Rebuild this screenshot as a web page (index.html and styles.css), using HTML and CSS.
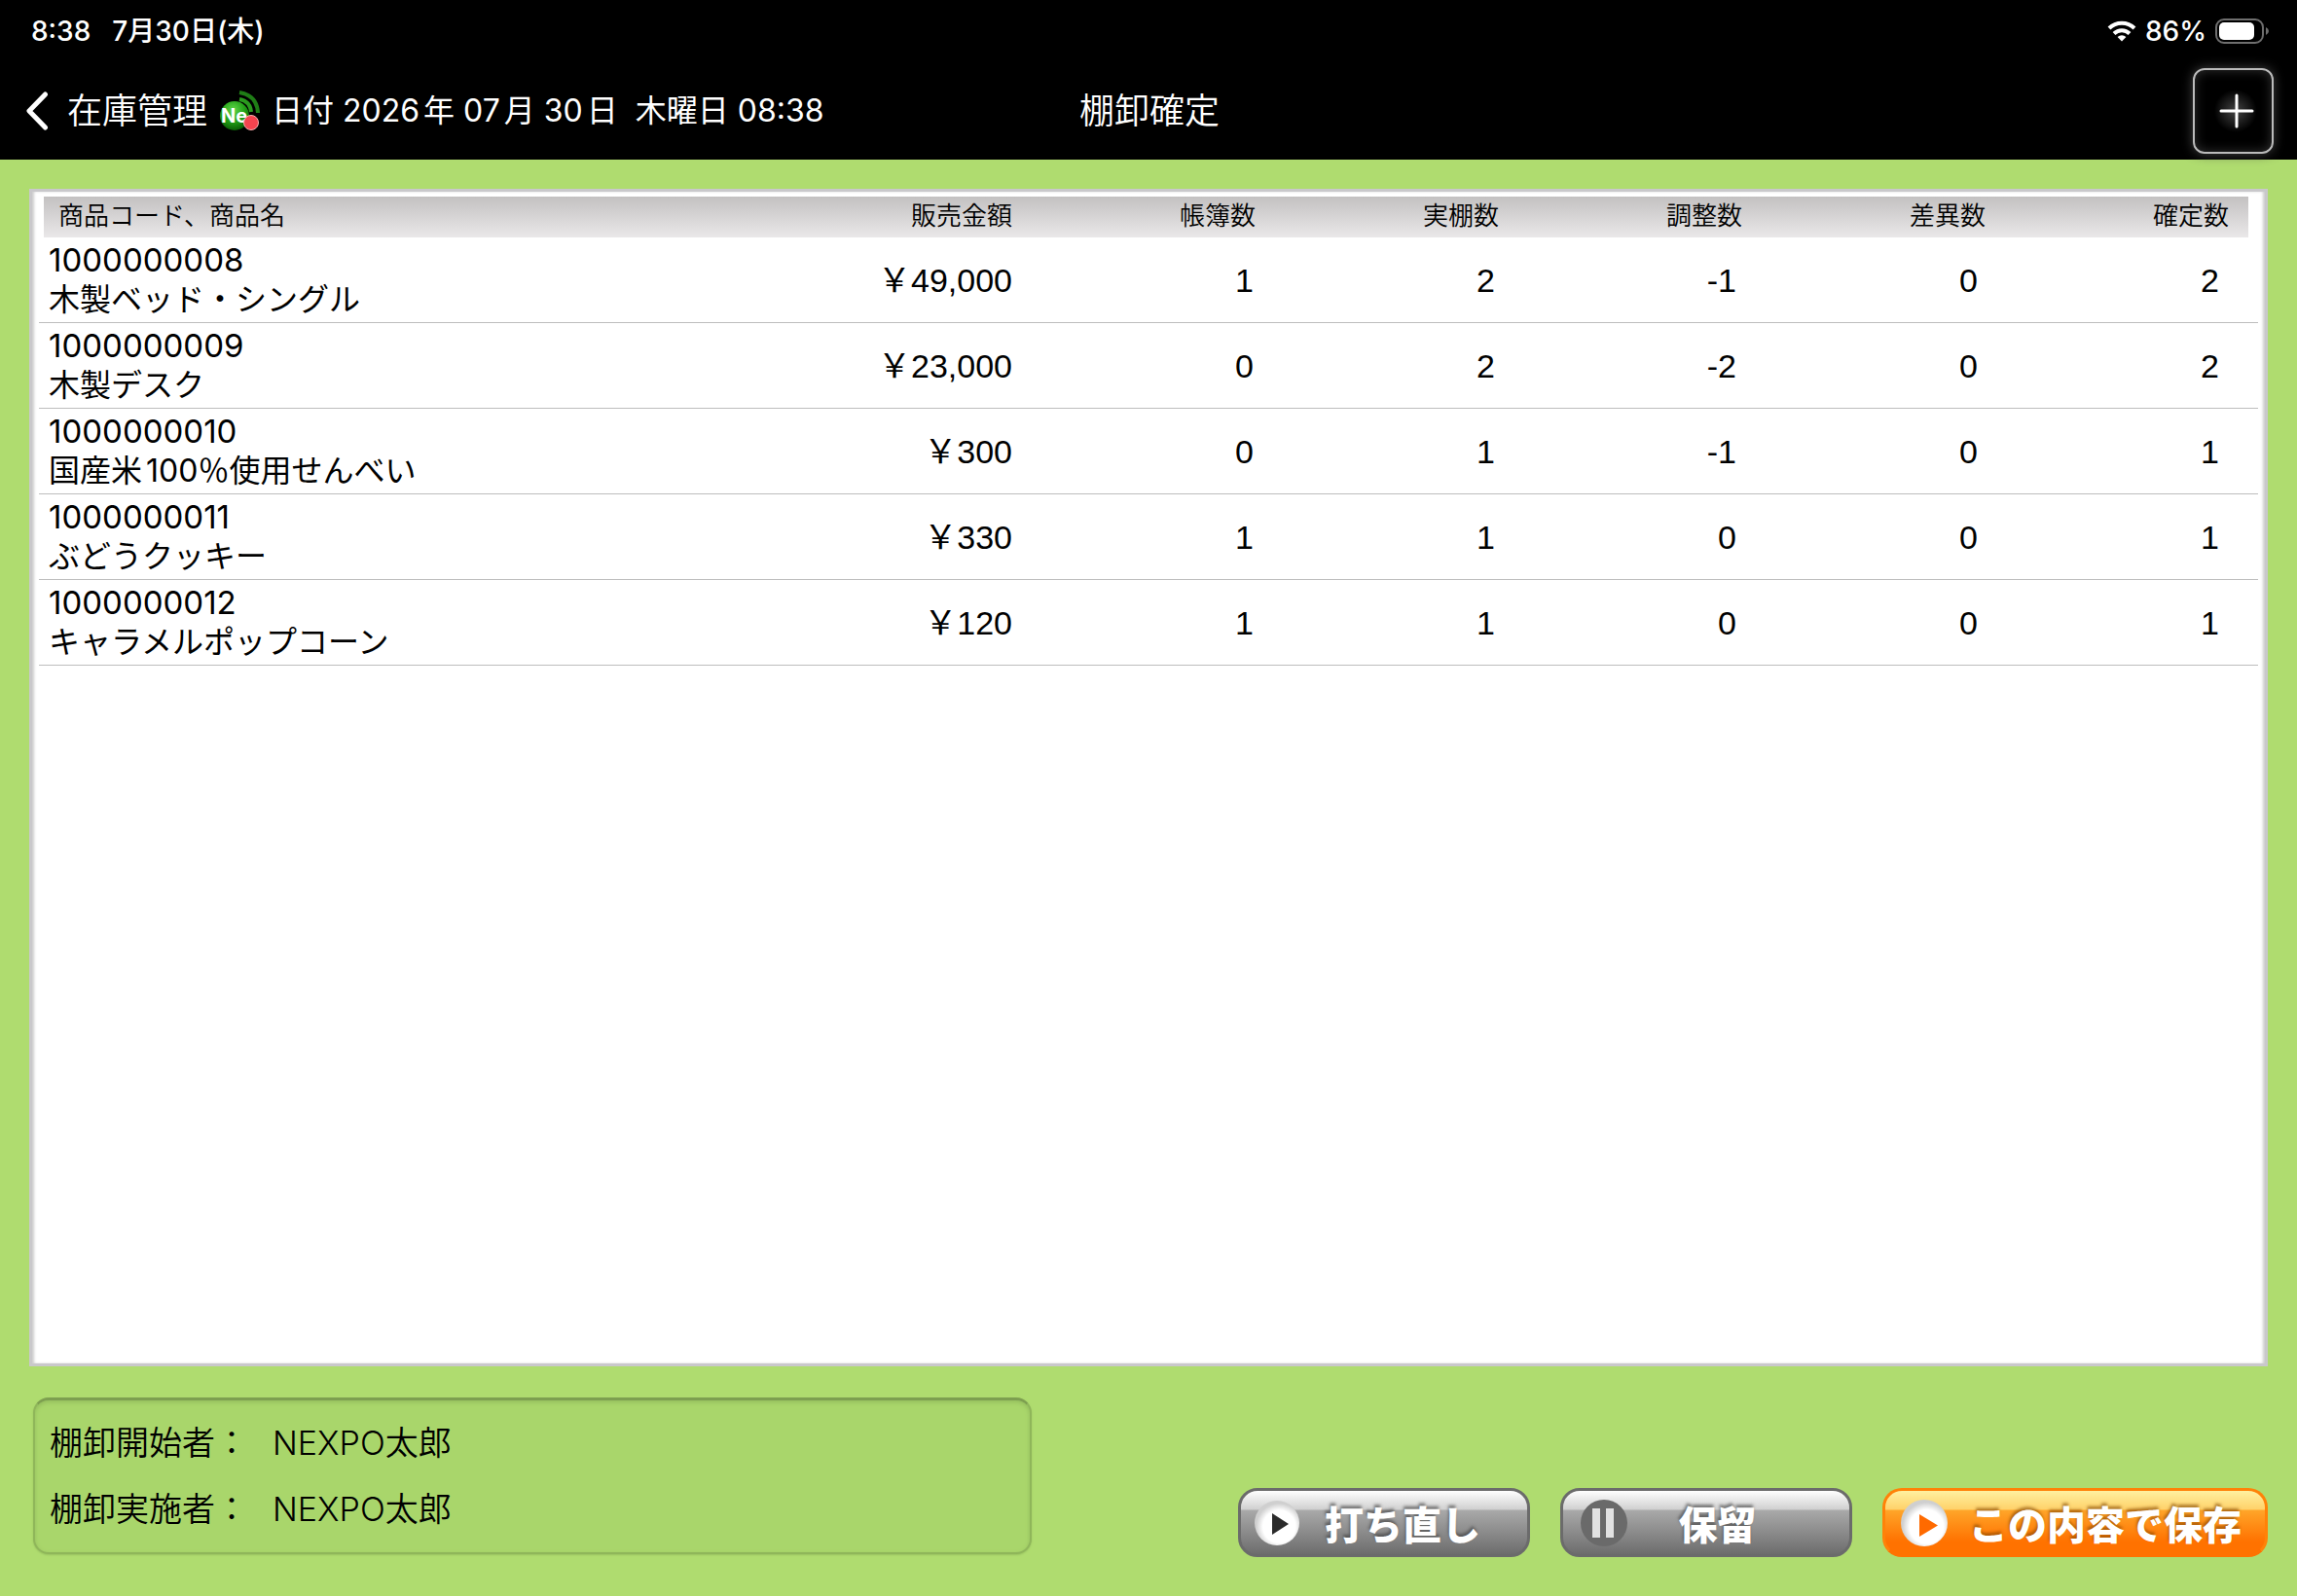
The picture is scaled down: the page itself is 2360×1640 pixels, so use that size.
FILE: index.html
```html
<!DOCTYPE html>
<html lang="ja">

<head>
    <meta charset="UTF-8">
    <meta name="viewport" content="width=device-width, initial-scale=1">
    <title>棚卸確定</title>
    <link rel="stylesheet" href="styles.css">
</head>

<body>

    <header class="topbar">
        <div class="statusbar">
            <div class="status-left">
                <span>8:38</span>
                <span>7月30日(木)</span>
            </div>
            <div class="status-right">
                <svg class="wifi" viewBox="0 0 30 22" width="30" height="22" aria-hidden="true">
                    <path d="M2 8a18.500 18.500 0 0 1 26 0" fill="none" stroke="#fff" stroke-width="4" />
                    <path d="M7 13.500a11.500 11.500 0 0 1 16 0" fill="none" stroke="#fff" stroke-width="4" />
                    <path d="M10.600 17a6.400 6.400 0 0 1 8.800 0L15 21.500z" fill="#fff" />
                </svg>
                <span>86%</span>
                <svg class="battery" viewBox="0 0 56 28" width="56" height="28" aria-hidden="true">
                    <rect x="1" y="2" width="48" height="24" rx="8" fill="none" stroke="#6e6e6e" stroke-width="2" />
                    <rect x="4" y="5" width="36" height="18" rx="5" fill="#fff" />
                    <path d="M52 10q3 1.500 3 4t-3 4z" fill="#6e6e6e" />
                </svg>
            </div>
        </div>

        <nav class="navbar">
            <div class="nav-left">
                <a class="back" href="#">
                    <svg viewBox="0 0 24 40" width="24" height="40" aria-hidden="true">
                        <path d="M20.500 3L4 20l16.500 17" fill="none" stroke="#fff" stroke-width="5" stroke-linecap="round" stroke-linejoin="round" />
                    </svg>
                    <span>在庫管理</span>
                </a>
                <svg class="signal" viewBox="0 0 42 42" width="42" height="42" aria-hidden="true">
                    <defs>
                        <radialGradient id="ball" cx="45%" cy="30%" r="70%">
                            <stop offset="0" stop-color="#5fd648" />
                            <stop offset="0.600" stop-color="#1f9c14" />
                            <stop offset="1" stop-color="#0a5c06" />
                        </radialGradient>
                    </defs>
                    <circle cx="16" cy="26" r="15" fill="url(#ball)" />
                    <path d="M21 2q18 3 19 21" fill="none" stroke="#1f7d16" stroke-width="4" />
                    <path d="M21 9q11 2 12 13" fill="none" stroke="#2a9a1e" stroke-width="4" />
                    <text x="2" y="33" class="signal-text">Ne</text>
                    <circle cx="33" cy="33" r="7.500" fill="#f5444f" stroke="#f7b0b0" stroke-width="1" />
                </svg>
                <span class="date">日付 2026年 07月 30日  木曜日 08:38</span>
            </div>
            <h1>棚卸確定</h1>
            <div class="nav-right">
                <button class="add" type="button" aria-label="追加">
                    <svg viewBox="0 0 36 36" width="36" height="36" aria-hidden="true">
                        <path d="M18 2v32M2 18h32" stroke="#fff" stroke-width="3" stroke-linecap="round" />
                    </svg>
                </button>
            </div>
        </nav>
    </header>

    <main>
        <div class="panel">
            <table class="stock">
                <thead>
                    <tr>
                        <th>商品コード、商品名</th>
                        <th>販売金額</th>
                        <th>帳簿数</th>
                        <th>実棚数</th>
                        <th>調整数</th>
                        <th>差異数</th>
                        <th>確定数</th>
                    </tr>
                </thead>
                <tbody>
                    <tr>
                        <td><span class="code">1000000008</span><br>木製ベッド・シングル</td>
                        <td>￥49,000</td>
                        <td>1</td>
                        <td>2</td>
                        <td>-1</td>
                        <td>0</td>
                        <td>2</td>
                    </tr>
                    <tr>
                        <td><span class="code">1000000009</span><br>木製デスク</td>
                        <td>￥23,000</td>
                        <td>0</td>
                        <td>2</td>
                        <td>-2</td>
                        <td>0</td>
                        <td>2</td>
                    </tr>
                    <tr>
                        <td><span class="code">1000000010</span><br>国産米100％使用せんべい</td>
                        <td>￥300</td>
                        <td>0</td>
                        <td>1</td>
                        <td>-1</td>
                        <td>0</td>
                        <td>1</td>
                    </tr>
                    <tr>
                        <td><span class="code">1000000011</span><br>ぶどうクッキー</td>
                        <td>￥330</td>
                        <td>1</td>
                        <td>1</td>
                        <td>0</td>
                        <td>0</td>
                        <td>1</td>
                    </tr>
                    <tr>
                        <td><span class="code">1000000012</span><br>キャラメルポップコーン</td>
                        <td>￥120</td>
                        <td>1</td>
                        <td>1</td>
                        <td>0</td>
                        <td>0</td>
                        <td>1</td>
                    </tr>
                </tbody>
            </table>
        </div>

        <div class="bottom">
            <dl class="staff">
                <dt>棚卸開始者：</dt>
                <dd>NEXPO太郎</dd>
                <dt>棚卸実施者：</dt>
                <dd>NEXPO太郎</dd>
            </dl>

            <div class="actions">
                <button class="btn" type="button">
                    <svg viewBox="0 0 48 48" width="48" height="48" aria-hidden="true">
                        <defs>
                            <radialGradient id="disc" cx="55%" cy="58%" r="52%">
                                <stop offset="0.700" stop-color="#fff" />
                                <stop offset="1" stop-color="#cfcfcf" />
                            </radialGradient>
                        </defs>
                        <circle cx="24" cy="24" r="23" fill="url(#disc)" />
                        <path d="M19 14v22l17-11z" fill="#2b2b2b" />
                    </svg>
                    <span>打ち直し</span>
                </button>
                <button class="btn btn-hold" type="button">
                    <svg viewBox="0 0 48 48" width="48" height="48" aria-hidden="true">
                        <circle cx="24" cy="24" r="24" fill="#6a6a6a" />
                        <path d="M12 9h8v30h-8zM26 9h8v30h-8z" fill="#e2e2e2" />
                    </svg>
                    <span>保留</span>
                </button>
                <button class="btn btn-save" type="button">
                    <svg viewBox="0 0 48 48" width="48" height="48" aria-hidden="true">
                        <circle cx="24" cy="24" r="24" fill="url(#disc)" />
                        <path d="M19 15v23l19-11.500z" fill="#ff6a00" />
                    </svg>
                    <span>この内容で保存</span>
                </button>
            </div>
        </div>
    </main>

</body>

</html>
```
FILE: styles.css
```css
* {
    margin: 0;
    padding: 0;
    box-sizing: border-box;
}

body {
    display: flex;
    flex-direction: column;
    min-height: 100vh;
    background: #afdc6f;
    color: #000;
    font-family: Inter, "Noto Sans CJK JP", sans-serif;
    font-size: 32px;
    line-height: 40px;
    text-autospace: normal;
}

svg {
    display: block;
    flex: none;
}

/* black header */
.topbar {
    background: #000;
    color: #fff;
}

.statusbar {
    display: flex;
    justify-content: space-between;
    align-items: center;
    height: 64px;
    padding: 0 28px 0 32px;
    font-size: 28px;
    font-weight: 500;
    text-autospace: no-autospace;
}

.status-left {
    display: flex;
    gap: 22px;
}

.status-right {
    display: flex;
    align-items: center;
    gap: 9px;
}

.navbar {
    display: grid;
    grid-template-columns: 1fr auto 1fr;
    align-items: center;
    height: 100px;
    padding: 0 24px 0 26px;
}

.nav-left {
    display: flex;
    align-items: center;
    gap: 12px;
}

.nav-right {
    display: flex;
    justify-content: flex-end;
}

.navbar h1 {
    font-size: 36px;
    font-weight: 350;
}

.back {
    display: flex;
    align-items: center;
    gap: 19px;
    color: #fff;
    font-size: 36px;
    font-weight: 350;
    text-decoration: none;
}

.signal-text {
    font-size: 20px;
    font-weight: 700;
    fill: #fff;
}

.date {
    white-space: pre;
}

.add {
    display: flex;
    align-items: center;
    justify-content: center;
    width: 83px;
    height: 88px;
    padding-left: 6px;
    border: 2px solid #bbb;
    border-radius: 12px;
    background: radial-gradient(circle at 53% 50%, #444 0, #000 22px);
    box-shadow: 0 0 12px #444, inset 0 0 12px #333;
}

/* stock table */
main {
    flex: 1;
    display: flex;
    flex-direction: column;
    gap: 32px;
    padding: 30px 30px 40px;
}

.panel {
    flex: 1;
    padding: 5px 7px;
    border: 3px solid #c9c8cb;
    background: #fff;
    box-shadow: inset 3px 0 3px -1px #ccc, inset -3px 0 3px -1px #ccc;
}

.stock,
.stock thead,
.stock tbody {
    display: block;
}

.stock tr {
    display: grid;
    align-items: center;
}

.stock thead tr {
    grid-template-columns: 1fr 200px repeat(5, 250px);
    height: 42px;
    margin: 0 10px 0 5px;
    padding: 0 20px 2px 15px;
    background: linear-gradient(#c3c1c1, #eae8e9);
    font-size: 26px;
}

.stock th {
    font-weight: 350;
    text-align: right;
}

.stock tbody tr {
    grid-template-columns: 1fr 300px repeat(5, 248px);
    height: 88px;
    padding: 0 40px 0 10px;
    border-bottom: 1px solid #bdbdbd;
}

.stock td {
    font-family: "Liberation Sans", "Noto Sans CJK JP", sans-serif;
    font-size: 34px;
    text-align: right;
    text-autospace: no-autospace;
}

.stock td:first-child {
    font-family: Inter, "Noto Sans CJK JP", sans-serif;
    font-size: 32px;
    text-autospace: normal;
}

.stock .code {
    font-size: 33px;
}

.stock th:first-child,
.stock td:first-child {
    text-align: left;
}

/* staff box and buttons */
.bottom {
    display: flex;
    justify-content: space-between;
    height: 164px;
    padding-left: 4px;
}

.staff {
    display: grid;
    grid-template-columns: auto 1fr;
    align-content: center;
    column-gap: 25px;
    width: 44.7%;
    height: 161px;
    padding: 0 15px;
    border: 2px solid #8fb65a;
    border-top: 3px solid #7d9f50;
    border-radius: 16px;
    background: #a9d66b;
    box-shadow: inset 0 2px 4px #94bd5d, 0 1px 2px #98c160;
    font-size: 34px;
    font-weight: 350;
    line-height: 68px;
    text-autospace: no-autospace;
}

.actions {
    display: flex;
    align-items: flex-end;
    gap: 31px;
}

.btn {
    display: flex;
    align-items: center;
    width: 300px;
    height: 71px;
    padding: 0 23px 0 13px;
    border: 3px solid #6b6b6b;
    border-radius: 20px;
    background: linear-gradient(#fff 0, #d0d0d0 19px, #a9a9a9 20px, #6d6d6d 100%);
    color: #fff;
    font-family: "Noto Sans CJK JP", sans-serif;
    font-size: 40px;
    font-weight: 900;
    line-height: 60px;
    text-shadow: -1px -3px 3px rgba(60, 60, 60, 0.6);
}

.btn span {
    flex: 1;
    text-align: center;
}

.btn-hold {
    padding: 0 43px 0 18px;
}

.btn-save {
    width: 396px;
    padding: 0 24px 0 16px;
    border-color: #ff8208 #ff8208 #ff7200;
    background: linear-gradient(#fff0a0 0, #ffd26a 19px, #ffa529 20px, #ff7200 80%);
    text-shadow: -1px -3px 3px rgba(130, 70, 0, 0.6);
}

.btn-save span {
    text-align: right;
}
```
